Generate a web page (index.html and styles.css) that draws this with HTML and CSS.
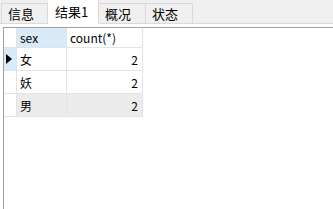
FILE: index.html
```html
<!DOCTYPE html>
<html lang="zh">
<head>
    <meta charset="UTF-8">
    <title>结果1</title>
    <link rel="stylesheet" href="styles.css">
</head>
<body>
    <!-- Tabs -->
    <div class="tab-bar">
        <div class="tab">信息</div>
        <div class="tab active">结果1</div>
        <div class="tab">概况</div>
        <div class="tab">状态</div>
    </div>

    <!-- Result grid -->
    <div class="grid-frame">
        <table class="grid">
            <tr class="head">
                <td class="ind"></td>
                <td class="col-sex selected">sex</td>
                <td class="col-count">count(*)</td>
            </tr>
            <tr>
                <td class="ind current"><span class="arrow"></span></td>
                <td>女</td>
                <td class="num">2</td>
            </tr>
            <tr>
                <td class="ind"></td>
                <td>妖</td>
                <td class="num">2</td>
            </tr>
            <tr class="alt">
                <td class="ind"></td>
                <td>男</td>
                <td class="num">2</td>
            </tr>
        </table>
    </div>
</body>
</html>
```

FILE: styles.css
```css
* {
    margin: 0;
    padding: 0;
    box-sizing: border-box;
}

html, body {
    height: 100%;
}

body {
    background: #fff;
    color: #000;
    font-family: "Noto Sans CJK SC", "Noto Sans", sans-serif;
    font-size: 12px;
    display: flex;
    flex-direction: column;
}

.tab-bar {
    display: flex;
    align-items: flex-end;
    height: 24px;
    background: #f0f0f0;
    border-bottom: 1px solid #dadada;
    padding-left: 1px;
}

.tab {
    width: 47px;
    height: 21px;
    margin-bottom: -1px;
    border: 1px solid #d9d9d9;
    border-left: none;
    border-bottom: 1px solid #dadada;
    font-size: 13px;
    line-height: 19px;
    padding-left: 6px;
}

.tab:first-child {
    border-left: 1px solid #d9d9d9;
}

.tab.active {
    width: 51px;
    height: 25px;
    background: #fff;
    border-color: #fff;
    border-right: 1px solid #d9d9d9;
    line-height: 23px;
    padding-left: 7px;
}

.grid-frame {
    flex: 1;
    margin: 3px 0 0 3px;
    border-top: 1px solid #a0a0a0;
    border-left: 1px solid #a0a0a0;
}

.grid {
    border-collapse: separate;
    border-spacing: 0;
    table-layout: fixed;
}

.grid td {
    height: 23px;
    border-right: 1px solid #e3e3e3;
    border-bottom: 1px solid #e3e3e3;
    padding: 0 3px;
    white-space: nowrap;
}

.grid .head td {
    height: 20px;
}

.grid td.ind {
    width: 13px;
    padding: 0;
    background: #fff;
}

.grid td.current {
    background: #d9eaf9;
}

.col-sex {
    width: 50px;
}

.col-count {
    width: 76px;
}

.grid td.selected {
    background: #d9eaf9;
}

.grid td.num {
    text-align: right;
    padding-right: 4px;
}

.alt td {
    background: #ececec;
}

.arrow {
    display: block;
    width: 0;
    height: 0;
    margin-left: 2px;
    border-top: 5px solid transparent;
    border-bottom: 5px solid transparent;
    border-left: 6px solid #000;
}
```
